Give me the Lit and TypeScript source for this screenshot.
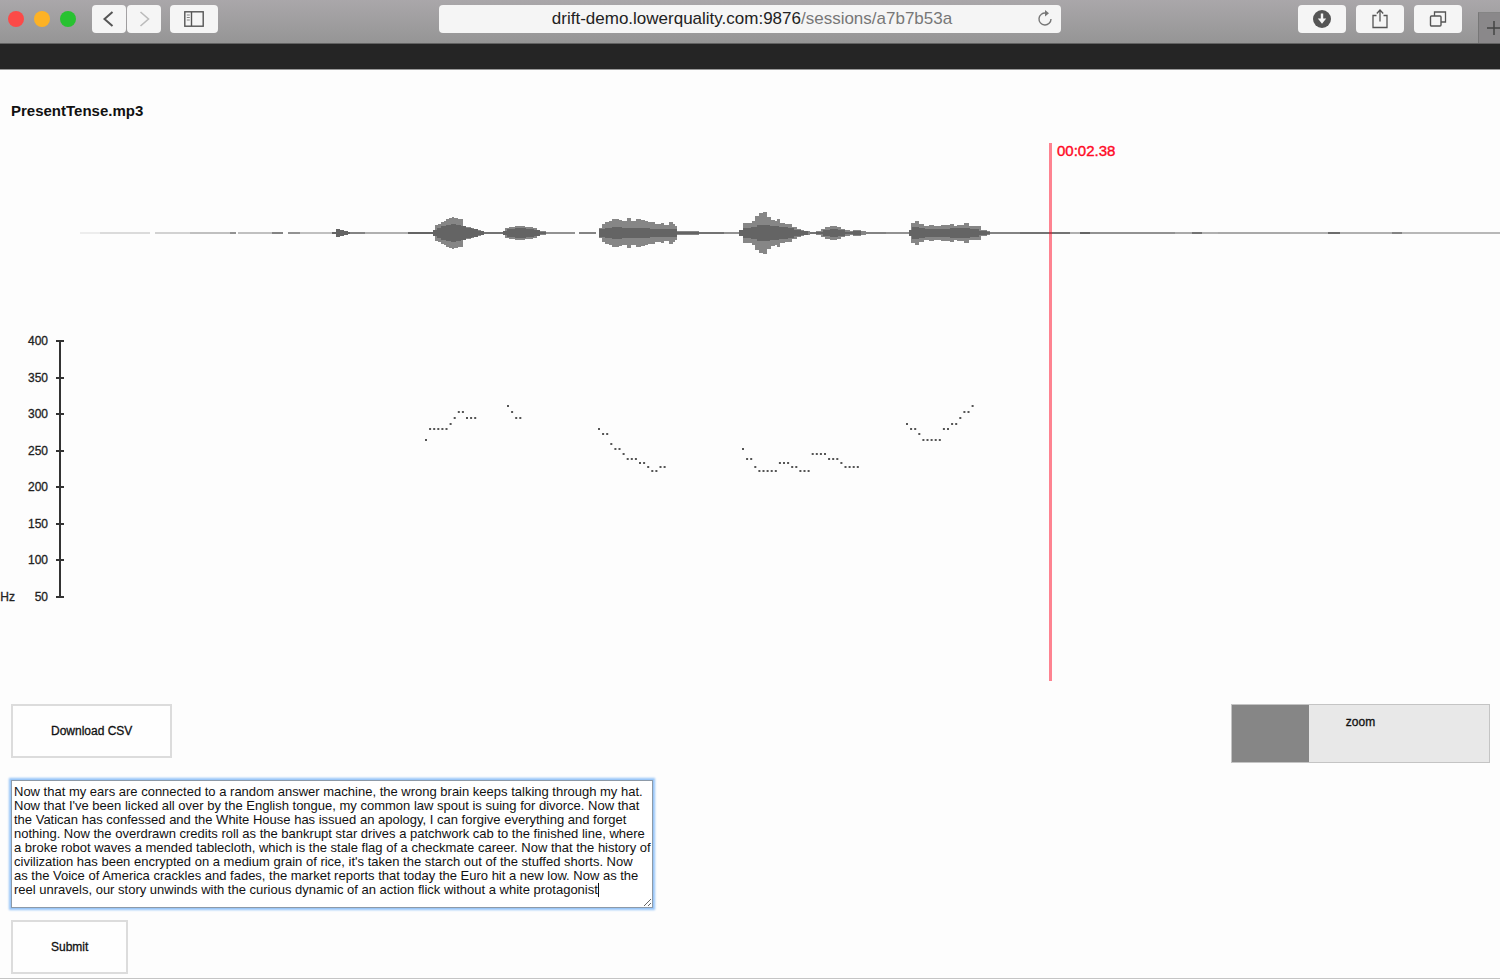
import { LitElement, html, svg, css } from "lit";
import { customElement } from "lit/decorators.js";

type Point = [number, number];

const BASELINE = 90;

// Loudness envelopes: [x, half height], each value held until the next x.
const PEAKS: Point[][] = [
  [[433, 3], [435, 8], [438, 9], [441, 11], [444, 12], [446, 14], [449, 15], [452, 16], [454, 15], [458, 14], [463, 7], [466, 6], [471, 5], [474, 4], [478, 3], [481, 2], [484, 0]],
  [[503, 2], [505, 5], [509, 6], [515, 7], [525, 6], [533, 5], [537, 3], [540, 2], [546, 0]],
  [[599, 5], [602, 9], [605, 11], [609, 12], [612, 14], [619, 13], [622, 12], [627, 15], [631, 12], [636, 14], [641, 13], [645, 12], [648, 11], [655, 9], [661, 10], [664, 8], [669, 11], [673, 9], [675, 7], [677, 2], [699, 0]],
  [[739, 3], [743, 10], [752, 12], [755, 17], [759, 20], [763, 21], [767, 16], [771, 13], [775, 12], [777, 14], [780, 10], [785, 9], [792, 6], [797, 4], [801, 3], [804, 2], [810, 0]],
  [[816, 2], [821, 4], [825, 6], [830, 7], [837, 6], [841, 4], [845, 3], [850, 2], [853, 3], [861, 2], [866, 0]],
  [[909, 3], [911, 10], [915, 12], [919, 9], [924, 7], [929, 8], [934, 7], [941, 8], [950, 9], [954, 7], [957, 8], [964, 10], [969, 7], [981, 3], [987, 2], [990, 0]],
];

const AVERAGES: Point[][] = [
  [[433, 3], [437, 5], [441, 7], [446, 8], [451, 9], [456, 8], [461, 7], [466, 5], [472, 4], [478, 2], [484, 0]],
  [[503, 2], [507, 4], [515, 5], [526, 4], [534, 3], [540, 1], [546, 0]],
  [[599, 4], [605, 5], [612, 6], [622, 5], [650, 4], [677, 1], [699, 0]],
  [[739, 3], [743, 5], [751, 6], [757, 8], [770, 7], [779, 6], [788, 5], [794, 3], [801, 2], [808, 0]],
  [[816, 1], [823, 3], [830, 4], [838, 3], [845, 1], [853, 2], [861, 0]],
  [[909, 3], [912, 6], [919, 5], [925, 4], [950, 5], [970, 4], [979, 2], [987, 1], [990, 0]],
];

// Quiet stretches: [from, to, opacity].
const HUM: [number, number, number][] = [
  [80, 100, 0.1], [100, 150, 0.22], [155, 190, 0.28], [190, 230, 0.4], [230, 236, 0.7], [238, 272, 0.4],
  [272, 283, 0.8], [288, 300, 0.7], [300, 332, 0.4], [332, 350, 1], [350, 365, 0.8], [365, 408, 0.5],
  [408, 434, 1], [484, 504, 0.9], [544, 575, 0.7], [579, 596, 0.8], [677, 724, 0.9], [724, 740, 0.7],
  [806, 818, 0.9], [864, 886, 0.8], [886, 910, 0.7], [988, 1020, 0.8], [1020, 1070, 0.9],
  [1070, 1080, 0.5], [1080, 1090, 1], [1090, 1175, 0.7], [1175, 1192, 0.55], [1192, 1202, 0.9],
  [1202, 1218, 0.5], [1218, 1290, 0.55], [1290, 1328, 0.5], [1328, 1340, 0.95], [1340, 1392, 0.5],
  [1392, 1402, 0.8], [1402, 2600, 0.45],
];

// Pitch track: start x, then [y, number of samples].
const PITCH: { x: number; runs: Point[] }[] = [
  { x: 426, runs: [[297, 1], [286, 5], [281, 1], [275, 1], [269, 2], [275, 3]] },
  { x: 508, runs: [[263, 1], [269, 1], [275, 2]] },
  { x: 599, runs: [[286, 1], [291, 2], [301, 1], [306, 2], [311, 1], [316, 3], [320, 2], [324, 1], [328, 2], [324, 2]] },
  { x: 743, runs: [[306, 1], [316, 2], [324, 1], [328, 5], [320, 3], [324, 2], [328, 3], [311, 4], [316, 3], [320, 1], [324, 4]] },
  { x: 907, runs: [[281, 1], [286, 2], [291, 1], [297, 5], [286, 2], [281, 2], [275, 1], [269, 2], [263, 1]] },
];
const SAMPLE_STEP = 4.1;

const FREQUENCIES = [400, 350, 300, 250, 200, 150, 100, 50];

const TRANSCRIPT = [
  "Now that my ears are connected to a random answer machine, the wrong brain keeps talking through my hat.",
  "Now that I've been licked all over by the English tongue, my common law spout is suing for divorce. Now that",
  "the Vatican has confessed and the White House has issued an apology, I can forgive everything and forget",
  "nothing. Now the overdrawn credits roll as the bankrupt star drives a patchwork cab to the finished line, where",
  "a broke robot waves a mended tablecloth, which is the stale flag of a checkmate career. Now that the history of",
  "civilization has been encrypted on a medium grain of rice, it's taken the starch out of the stuffed shorts. Now",
  "as the Voice of America crackles and fades, the market reports that today the Euro hit a new low. Now as the",
  "reel unravels, our story unwinds with the curious dynamic of an action flick without a white protagonist",
].join("\n");

function envelope(points: Point[]): string {
  const top: string[] = [];
  const bottom: string[] = [];
  for (let i = 0; i < points.length - 1; i++) {
    const [x, h] = points[i];
    const next = points[i + 1][0];
    top.push(`L${x} ${BASELINE - h}L${next} ${BASELINE - h}`);
    bottom.unshift(`L${next} ${BASELINE + h}L${x} ${BASELINE + h}`);
  }
  return `M${points[0][0]} ${BASELINE}${top.join("")}${bottom.join("")}Z`;
}

@customElement("browser-bar")
export class BrowserBar extends LitElement {
  static styles = css`
    :host {
      display: block;
      font-family: "Liberation Sans", Arial, sans-serif;
    }
    .bar {
      display: grid;
      grid-template-columns: 1fr 41.5% 1fr;
      height: 44px;
      box-sizing: border-box;
      background: linear-gradient(#aaa7aa, #959595);
      border-bottom: 1px solid #626262;
    }
    .group {
      display: flex;
      align-items: flex-start;
      padding-top: 5px;
    }
    .left {
      padding-left: 8px;
    }
    .right {
      justify-content: flex-end;
      gap: 10px;
    }
    .lights {
      display: flex;
      gap: 10px;
      padding: 6px 16px 0 0;
    }
    .light {
      width: 16px;
      height: 16px;
      border-radius: 50%;
    }
    .red { background: #fc4a48; }
    .amber { background: #fdb225; }
    .green { background: #28c231; }
    button {
      display: flex;
      align-items: center;
      justify-content: center;
      width: 48px;
      height: 28px;
      margin: 0;
      padding: 0;
      border: 0;
      border-radius: 4px;
      background: #f5f5f5;
      color: #555;
    }
    .nav {
      display: flex;
      gap: 1px;
      margin-right: 9px;
    }
    .nav button {
      width: 34px;
    }
    .nav button:last-child {
      color: #bbb;
    }
    .address {
      display: grid;
      grid-template-columns: 36px 1fr 32px;
      align-items: center;
      height: 28px;
      margin-top: 5px;
      border-radius: 4px;
      background: #f5f5f5;
    }
    .url {
      grid-column: 2;
      text-align: center;
      font-size: 17px;
      line-height: 20px;
      color: #777;
      text-decoration: none;
      white-space: nowrap;
    }
    .host {
      color: #222;
    }
    .address button {
      width: 32px;
      background: none;
      color: #777;
    }
    .right .tab {
      width: 22px;
      height: 31px;
      margin: 7px 0 0 6px;
      border-radius: 0;
      border-left: 1px solid #777;
      border-top: 1px solid #858585;
      background: #8a888a;
      color: #444;
      overflow: hidden;
      justify-content: flex-start;
    }
    .tab svg {
      flex: none;
      margin-left: 7px;
    }
    svg {
      display: block;
      fill: none;
      stroke: currentColor;
    }
  `;

  render() {
    return html`
      <header class="bar">
        <div class="group left">
          <div class="lights">
            <span class="light red"></span>
            <span class="light amber"></span>
            <span class="light green"></span>
          </div>
          <div class="nav">
            <button aria-label="Back">
              <svg width="16" height="18" viewBox="0 0 16 18"><path d="M11.500 2 3.500 9l8 7" stroke-width="2" /></svg>
            </button>
            <button aria-label="Forward">
              <svg width="16" height="18" viewBox="0 0 16 18"><path d="m4.500 2 8 7-8 7" stroke-width="1.600" /></svg>
            </button>
          </div>
          <button aria-label="Sidebar">
            <svg width="20" height="16" viewBox="0 0 20 16">
              <rect x=".8" y=".8" width="18.400" height="14.400" stroke-width="1.400" />
              <path d="M7.500 1v14" stroke-width="1.400" />
              <path d="M2.800 4h3M2.800 6.500h3M2.800 9h3" stroke-width="1" opacity=".7" />
            </svg>
          </button>
        </div>
        <div class="address">
          <a class="url" href="#"><span class="host">drift-demo.lowerquality.com:9876</span>/sessions/a7b7b53a</a>
          <button aria-label="Reload">
            <svg width="16" height="18" viewBox="0 0 16 18">
              <path d="M14 9a6 6 0 1 1-5-5.900" stroke-width="1.400" />
              <path d="M8 0 12 3.300 8 6.500Z" fill="currentColor" stroke="none" />
            </svg>
          </button>
        </div>
        <div class="group right">
          <button aria-label="Downloads">
            <svg width="18" height="18" viewBox="0 0 18 18">
              <circle cx="9" cy="9" r="9" fill="currentColor" stroke="none" />
              <path d="M9 3.500v6" stroke="#f5f5f5" stroke-width="2.400" />
              <path d="M4.800 8.500h8.400L9 13.800Z" fill="#f5f5f5" stroke="none" />
            </svg>
          </button>
          <button aria-label="Share">
            <svg width="18" height="22" viewBox="0 0 18 22">
              <path d="M5.500 7.500h-3.500v12h14v-12h-3.500" stroke-width="1.300" />
              <path d="M9 13.500V3M5.800 5.500 9 2l3.200 3.500" stroke-width="1.300" />
            </svg>
          </button>
          <button aria-label="Tabs">
            <svg width="18" height="18" viewBox="0 0 18 18">
              <rect x="1.500" y="6" width="10.500" height="10" rx="1" stroke-width="1.400" />
              <path d="M5.500 6V2h11v10h-4.500" stroke-width="1.300" />
            </svg>
          </button>
          <button class="tab" aria-label="New tab">
            <svg width="16" height="16" viewBox="0 0 16 16"><path d="M8 1v14M1 8h14" stroke-width="1.500" /></svg>
          </button>
        </div>
      </header>
    `;
  }
}

@customElement("pitch-chart")
export class PitchChart extends LitElement {
  static styles = css`
    :host {
      display: block;
    }
    .chart {
      display: block;
      width: 100%;
      height: 538px;
      font-family: "Liberation Sans", Arial, sans-serif;
    }
    .peak { fill: #868686; }
    .average, .hum { fill: #646464; }
    .dot { fill: #555; }
    .axis {
      fill: none;
      stroke: #333;
      stroke-width: 2;
    }
    .label {
      font-size: 12px;
      fill: #222;
      text-anchor: end;
      stroke: #222;
      stroke-width: 0.3;
    }
    .cursor {
      fill: #ff0a26;
      opacity: 0.5;
    }
    .time {
      font-size: 15px;
      fill: #ff0a26;
      stroke: #ff0a26;
      stroke-width: 0.4;
    }
  `;

  private dots(x: number, runs: Point[]) {
    let i = 0;
    return runs.flatMap(([y, count]) =>
      Array.from({ length: count }, () => {
        const cx = x + SAMPLE_STEP * i++;
        return svg`<rect class="dot" x=${cx - 1} y=${y - 1} width="2" height="2" />`;
      })
    );
  }

  render() {
    const axisTop = 198;
    const axisBottom = 454;
    const step = (axisBottom - axisTop) / (FREQUENCIES.length - 1);
    return html`
      <svg class="chart" role="img" aria-label="Waveform and pitch">
        ${HUM.map(([a, b, o]) => svg`<rect class="hum" x=${a} y=${BASELINE - 1} width=${b - a} height="2" opacity=${o} />`)}
        <path class="average" d="M336 86h4v1h4v1h4v4h-4v1h-4v1h-4Z" />
        ${PEAKS.map((p) => svg`<path class="peak" d=${envelope(p)} />`)}
        ${AVERAGES.map((p) => svg`<path class="average" d=${envelope(p)} />`)}
        ${PITCH.map((p) => this.dots(p.x, p.runs))}
        <path class="axis" d="M60 ${axisTop - 1}V${axisBottom + 1}" />
        ${FREQUENCIES.map((f, i) => {
          const y = Math.round(axisTop + step * i);
          return svg`
            <path class="axis" d="M56 ${y}h8" />
            <text class="label" x="48" y=${y + 4}>${f}</text>`;
        })}
        <text class="label" x="15" y=${axisBottom + 4}>Hz</text>
        <rect class="cursor" x="1049" y="0" width="3" height="538" />
        <text class="time" x="1057" y="13">00:02.38</text>
      </svg>
    `;
  }
}

@customElement("app-root")
export class AppRoot extends LitElement {
  static styles = css`
    :host {
      display: block;
      min-height: 100vh;
      box-sizing: border-box;
      overflow: hidden;
      background: #fdfdfd;
      border-bottom: 1px solid #c4c4c4;
      color: #111;
      font-family: "Liberation Sans", Arial, sans-serif;
      font-size: 12px;
      line-height: 14px;
    }
    .strip {
      height: 26px;
      box-sizing: border-box;
      background: #252525;
      border-bottom: 1px solid #999;
    }
    .title {
      margin: 0;
      padding: 31px 11px 22px;
      font-size: 15px;
      line-height: 20px;
      font-weight: bold;
    }
    .controls {
      display: flex;
      justify-content: space-between;
      align-items: flex-start;
      padding: 23px 10px 17px 11px;
    }
    .action {
      height: 54px;
      padding: 0 38px;
      border: 2px solid #dcdcdc;
      background: #fefefe;
      color: #111;
      font: inherit;
      -webkit-text-stroke: 0.3px #111;
    }
    .zoom {
      display: grid;
      width: 259px;
      height: 59px;
      box-sizing: border-box;
      border: 1px solid #c4c4c4;
    }
    .zoom-label {
      grid-area: 1 / 1;
      z-index: 1;
      justify-self: center;
      padding-top: 10px;
      pointer-events: none;
      -webkit-text-stroke: 0.3px #111;
    }
    .zoom-range {
      grid-area: 1 / 1;
      appearance: none;
      width: 100%;
      height: 100%;
      margin: 0;
      background: #e8e8e8;
    }
    .zoom-range::-webkit-slider-thumb {
      appearance: none;
      width: 77px;
      height: 57px;
      background: #868686;
    }
    .speech {
      padding: 0 11px;
    }
    .editor {
      position: relative;
      width: 642px;
      max-width: 100%;
      margin-bottom: 12px;
    }
    .transcript {
      display: block;
      box-sizing: border-box;
      width: 100%;
      height: 128px;
      margin: 0;
      padding: 4px 2px;
      border: 1px solid #8d9aa8;
      outline: 0;
      box-shadow: 0 0 2px 2px #94c4f8;
      background: #fff;
      color: #111;
      font: inherit;
      font-size: 13px;
      white-space: pre;
      overflow: hidden;
      caret-color: transparent;
    }
    .caret {
      position: absolute;
      left: 587px;
      top: 103px;
      width: 1px;
      height: 14px;
      background: #111;
    }
  `;

  firstUpdated() {
    const box = this.renderRoot.querySelector("textarea")!;
    box.focus({ preventScroll: true });
    box.setSelectionRange(box.value.length, box.value.length);
  }

  render() {
    return html`
      <browser-bar></browser-bar>
      <div class="strip"></div>
      <main>
        <h1 class="title">PresentTense.mp3</h1>
        <pitch-chart></pitch-chart>
        <div class="controls">
          <button class="action">Download CSV</button>
          <div class="zoom">
            <label class="zoom-label" for="zoom">zoom</label>
            <input class="zoom-range" id="zoom" type="range" min="0" max="100" value="0" />
          </div>
        </div>
        <div class="speech">
          <div class="editor">
            <textarea class="transcript" aria-label="Transcript" spellcheck="false" .value=${TRANSCRIPT}></textarea>
            <span class="caret"></span>
          </div>
          <button class="action">Submit</button>
        </div>
      </main>
    `;
  }
}
